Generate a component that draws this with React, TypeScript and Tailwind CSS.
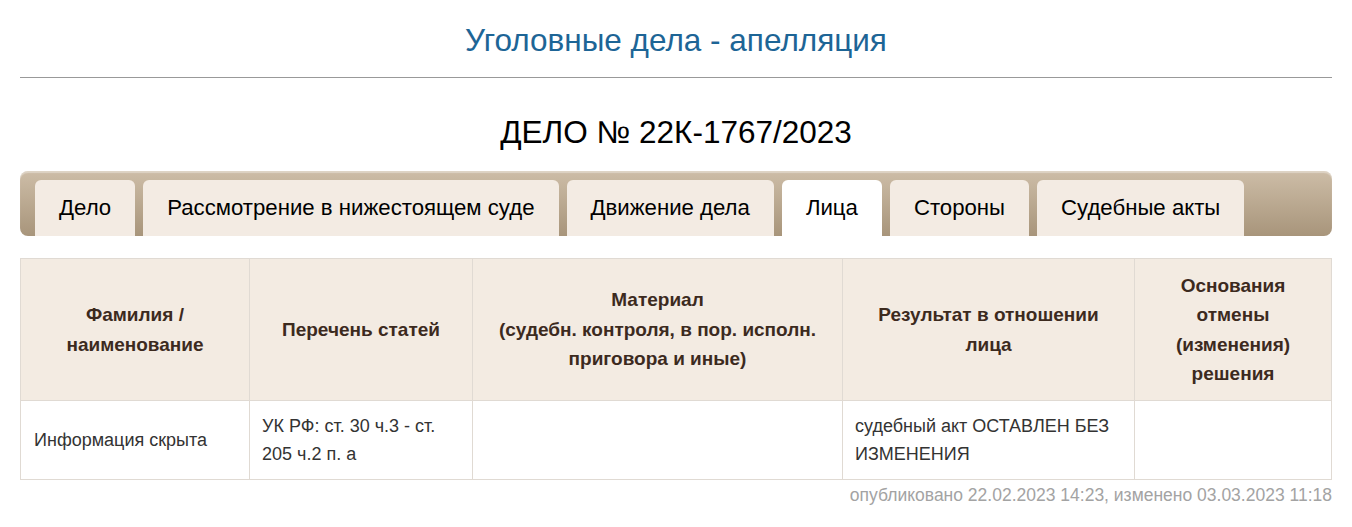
const tabs = [
  "Дело",
  "Рассмотрение в нижестоящем суде",
  "Движение дела",
  "Лица",
  "Стороны",
  "Судебные акты",
];

const App = () => {
  return (
    <div className="bg-white px-5 font-['Liberation_Sans',Arial,sans-serif]" style={{ minHeight: 527 }}>
      {/* PAGE TITLE */}
      <h1 className="pt-[20px] text-center text-[31.5px] leading-[40px] text-[#1d6596]">Уголовные дела - апелляция</h1>
      <div className="mt-[17px] h-px bg-[#999999]" />

      {/* CASE NUMBER */}
      <h2 className="mt-[37px] text-center text-[31.5px] leading-[34px] text-black">ДЕЛО № 22К-1767/2023</h2>

      {/* TABS */}
      <div className="mt-[22px] flex h-[65px] items-end gap-2 rounded-lg bg-gradient-to-b from-[#cdbda7] to-[#a8957b] px-[15px] shadow-[inset_0_2px_1px_rgba(255,255,255,0.35)]">
        {tabs.map((t) => (
          <div
            key={t}
            className={
              "flex h-[56px] items-center rounded-t-md px-6 text-[22.2px] text-black " +
              (t === "Лица" ? "bg-white" : "bg-[#f3ebe3]")
            }
          >
            {t}
          </div>
        ))}
      </div>

      {/* PERSONS TABLE */}
      <table className="mt-[22px] w-full table-fixed border-collapse">
        <colgroup>
          <col className="w-[229px]" />
          <col className="w-[223px]" />
          <col className="w-[370px]" />
          <col className="w-[292px]" />
          <col />
        </colgroup>
        <thead>
          <tr className="h-[142px] bg-[#f3ebe2] text-[19px] font-bold leading-[29.5px] text-[#3c2a1e]">
            <th className="border border-[#e0dad3] px-3">Фамилия /<br />наименование</th>
            <th className="border border-[#e0dad3] px-3">Перечень статей</th>
            <th className="border border-[#e0dad3] px-3">Материал<br />(судебн. контроля, в пор. исполн. приговора и иные)</th>
            <th className="border border-[#e0dad3] px-3">Результат в отношении лица</th>
            <th className="border border-[#e0dad3] px-3">Основания отмены (изменения) решения</th>
          </tr>
        </thead>
        <tbody>
          <tr className="h-[79px] text-[18px] leading-[28px] text-[#333333]">
            <td className="border border-[#e0dad3] px-[13px] align-middle">Информация скрыта</td>
            <td className="border border-[#e0dad3] px-[12px] align-middle">УК РФ: ст. 30 ч.3 - ст. 205 ч.2 п. а</td>
            <td className="border border-[#e0dad3] px-3"></td>
            <td className="border border-[#e0dad3] px-3 align-middle">судебный акт ОСТАВЛЕН БЕЗ ИЗМЕНЕНИЯ</td>
            <td className="border border-[#e0dad3] px-3"></td>
          </tr>
        </tbody>
      </table>

      {/* FOOTER */}
      <div className="mt-[4px] text-right text-[17.5px] leading-[22px] text-[#a3a3a3]">
        опубликовано 22.02.2023 14:23, изменено 03.03.2023 11:18
      </div>
    </div>
  );
};

export default App;
